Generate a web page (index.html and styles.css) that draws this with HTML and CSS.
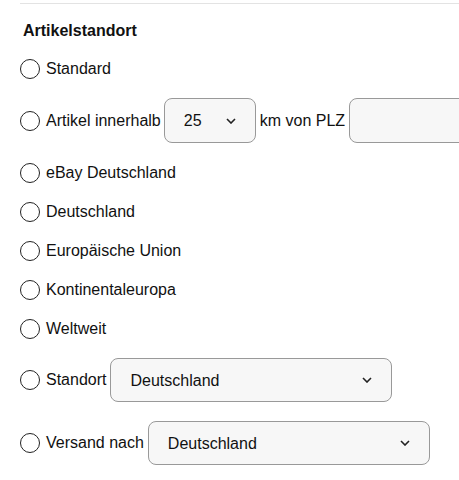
FILE: index.html
```html
<!DOCTYPE html>
<html lang="de">
<head>
  <meta charset="UTF-8">
  <title>Artikelstandort</title>
  <link rel="stylesheet" href="styles.css">
</head>
<body>
  <div class="panel">
    <h3 class="panel-title">Artikelstandort</h3>

    <div class="options">
      <label class="option">
        <input type="radio" name="standort" value="standard">
        <span>Standard</span>
      </label>

      <label class="option option-radius">
        <input type="radio" name="standort" value="umkreis">
        <span>Artikel innerhalb</span>
        <select class="field field-small">
          <option>25</option>
          <option>50</option>
          <option>100</option>
        </select>
        <span>km von PLZ</span>
        <input type="text" class="field field-zip">
      </label>

      <label class="option">
        <input type="radio" name="standort" value="ebay-de">
        <span>eBay Deutschland</span>
      </label>

      <label class="option">
        <input type="radio" name="standort" value="de">
        <span>Deutschland</span>
      </label>

      <label class="option">
        <input type="radio" name="standort" value="eu">
        <span>Europäische Union</span>
      </label>

      <label class="option">
        <input type="radio" name="standort" value="kontinent">
        <span>Kontinentaleuropa</span>
      </label>

      <label class="option">
        <input type="radio" name="standort" value="welt">
        <span>Weltweit</span>
      </label>

      <label class="option">
        <input type="radio" name="standort" value="land">
        <span>Standort</span>
        <select class="field field-wide">
          <option>Deutschland</option>
          <option>Österreich</option>
          <option>Schweiz</option>
        </select>
      </label>

      <label class="option">
        <input type="radio" name="standort" value="versand">
        <span>Versand nach</span>
        <select class="field field-wide">
          <option>Deutschland</option>
          <option>Österreich</option>
          <option>Schweiz</option>
        </select>
      </label>
    </div>
  </div>
</body>
</html>
```

FILE: styles.css
```css
body {
  margin: 0;
  padding: 0;
  font-family: "Liberation Sans", Arial, sans-serif;
  font-size: 16px;
  color: #111;
  background: #fff;
  overflow: hidden;
}

.panel {
  margin: 3px 0 0 20px;
  border-top: 1px solid #e3e3e3;
  overflow: hidden;
}

.panel-title {
  font-size: 16px;
  font-weight: bold;
  margin: 18px 0 0 3px;
  line-height: 18px;
}

.options {
  display: flex;
  flex-direction: column;
  gap: 19px;
  margin-top: 19px;
}

.option {
  display: flex;
  align-items: center;
  gap: 4px;
  min-height: 20px;
  white-space: nowrap;
}

.option-radius {
  margin-bottom: 1px;
}

.option-radius .field-small {
  margin-left: -1px;
}

.option input[type="radio"] {
  appearance: none;
  -webkit-appearance: none;
  width: 20px;
  height: 20px;
  margin: 0 2px 0 0;
  border: 1.5px solid #222;
  border-radius: 50%;
  background: #fff;
  flex-shrink: 0;
}

.field {
  height: 45px;
  border: 1px solid #999;
  border-radius: 8px;
  background-color: #f7f7f7;
  font-family: inherit;
  font-size: 16px;
  color: #111;
  box-sizing: border-box;
  flex-shrink: 0;
}

select.field {
  appearance: none;
  -webkit-appearance: none;
  padding: 0 19px;
  background-image: url("data:image/svg+xml,%3Csvg xmlns='http://www.w3.org/2000/svg' width='10' height='6' viewBox='0 0 10 6'%3E%3Cpath d='M1 1l4 4 4-4' fill='none' stroke='%23222' stroke-width='1.6'/%3E%3C/svg%3E");
  background-repeat: no-repeat;
  background-position: right 19px center;
}

.field-small {
  width: 92px;
}

.field-wide {
  width: 282px;
  height: 44px;
}

.field-zip {
  width: 180px;
  padding: 0 10px;
}
```
